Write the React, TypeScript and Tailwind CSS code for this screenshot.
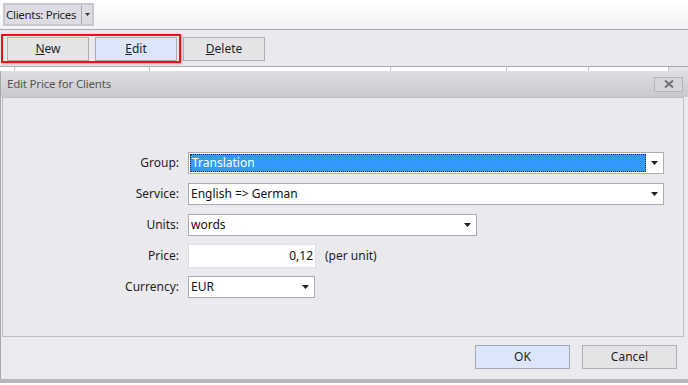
import React from "react";

const Arrow = () => (
  <svg width="7" height="4" viewBox="0 0 7 4" className="block">
    <path d="M0 0H7L3.5 4Z" fill="#1e1e2a" />
  </svg>
);

function Select({ text, w, selected }: { text: string; w: string; selected?: boolean }) {
  return (
    <div className={`${w} h-[22px] border border-[#abadb3] bg-white flex items-center`}>
      {selected ? (
        <div className="flex-1 h-[18px] ml-[1px] mr-[2px] bg-[#3399ff] border border-dotted border-[#3a2a00] text-white flex items-center pl-[1px]">
          {text}
        </div>
      ) : (
        <div className="flex-1 pl-[2px] text-[#111]">{text}</div>
      )}
      <div className="w-[12px] flex justify-center mr-[3px]">
        <Arrow />
      </div>
    </div>
  );
}

function Row({ label, children }: { label: string; children: React.ReactNode }) {
  return (
    <div className="flex items-center h-[23px]">
      <div className="w-[177px] text-right pr-[1px] text-[#1e1e1e]">{label}</div>
      <div className="ml-[8px] flex items-center">{children}</div>
    </div>
  );
}

function Btn({ children, blue, w = "w-[82px]" }: { children: React.ReactNode; blue?: boolean; w?: string }) {
  return (
    <div
      className={`${w} h-[24px] border flex items-center justify-center text-[#1e1e1e] ${
        blue ? "bg-[#dce6fb] border-[#a5aabb]" : "bg-[#e4e4e7] border-[#b0b0b4]"
      }`}
    >
      {children}
    </div>
  );
}

export default function App() {
  return (
    <div
      className="w-[688px] h-[385px] overflow-hidden flex flex-col text-[12px] bg-white"
      style={{ fontFamily: '"Noto Sans", "Open Sans", sans-serif' }}
    >
      {/* top bar */}
      <div className="h-[30px] bg-gradient-to-b from-white to-[#f3f3f6] border-b border-[#a7a7b0] pl-[3px] pt-[3px]">
        <div className="w-[91px] h-[23px] border-2 border-[#c8c8ce] flex">
          <div className="flex-1 bg-[#dcdce2] border-r border-[#aaaab2] flex items-center pl-[1px] text-[#1e1e1e] leading-none whitespace-nowrap text-[11.5px] tracking-[-0.3px]">
            Clients: Prices
          </div>
          <div className="w-[10px] bg-[#dcdce2] flex items-center justify-center">
            <svg width="5" height="3" viewBox="0 0 5 3"><path d="M0 0H5L2.5 3Z" fill="#333" /></svg>
          </div>
        </div>
      </div>

      {/* toolbar */}
      <div className="h-[36px] bg-[#e9e9ee] flex items-start pt-[4px]">
        <div className="ml-[1px] w-[180px] h-[29px] border-2 border-[#ee1111] flex pl-[4px] pt-[1px] gap-[6px] shadow-[1px_1px_2px_rgba(0,0,0,0.25)]">
          <Btn>
            <span><span className="underline">N</span>ew</span>
          </Btn>
          <Btn blue>
            <span><span className="underline">E</span>dit</span>
          </Btn>
        </div>
        <div className="ml-[2px] mt-[3px]">
          <Btn>
            <span><span className="underline">D</span>elete</span>
          </Btn>
        </div>
      </div>

      {/* grid header strip */}
      <div className="h-[5px] bg-white border-t border-[#a7a7b0] flex">
        <div className="w-[15px] border-r border-[#c4c4cc]" />
        <div className="w-[135px] border-r border-[#c4c4cc]" />
        <div className="w-[241px] border-r border-[#c4c4cc]" />
        <div className="w-[116px] border-r border-[#c4c4cc]" />
        <div className="w-[82px] border-r border-[#c4c4cc]" />
        <div className="w-[80px] border-r border-[#c4c4cc]" />
        <div className="flex-1 bg-[#e6e6ea]" />
      </div>

      {/* dialog */}
      <div className="h-[308px] flex flex-col border-l border-[#a8a8b0] bg-[#ebebef]">
        <div className="h-[26px] bg-gradient-to-b from-[#dfdfe3] to-[#c8c8cd] flex items-center pl-[6px] pr-[5px]">
          <div className="flex-1 text-[#555] pb-[1px] text-[11.5px] tracking-[-0.2px]">Edit Price for Clients</div>
          <div className="w-[29px] h-[15px] border border-[#b4b4ba] bg-[#d6d6da] flex items-center justify-center">
            <svg width="10" height="8" viewBox="0 0 10 8">
              <path d="M1 0.5L9 7.5M9 0.5L1 7.5" stroke="#707078" strokeWidth="2" />
            </svg>
          </div>
        </div>
        <div className="flex-1 flex flex-col pl-[1px] pr-[4px]">
          <div className="h-[240px] border border-[#bdbdc5] bg-[#e9e9ee] pt-[53px] flex flex-col gap-[8px]">
            <Row label="Group:">
              <Select text="Translation" w="w-[476px]" selected />
            </Row>
            <Row label="Service:">
              <Select text="English => German" w="w-[476px]" />
            </Row>
            <Row label="Units:">
              <Select text="words" w="w-[289px]" />
            </Row>
            <Row label="Price:">
              <div className="w-[128px] h-[24px] border border-[#dcdce0] bg-white flex items-center justify-end pr-[2px] text-[#111]">
                0,12
              </div>
              <div className="ml-[9px] text-[#1e1e1e]">(per unit)</div>
            </Row>
            <Row label="Currency:">
              <Select text="EUR" w="w-[127px]" />
            </Row>
          </div>
          <div className="flex-1 flex justify-end items-start pt-[8px] pr-[7px] gap-[12px]">
            <Btn blue w="w-[95px]">OK</Btn>
            <Btn w="w-[95px]">Cancel</Btn>
          </div>
        </div>
      </div>

      {/* bottom */}
      <div className="h-[4px] bg-[#b7b7bf]" />
      <div className="flex-1 bg-white" />
    </div>
  );
}
